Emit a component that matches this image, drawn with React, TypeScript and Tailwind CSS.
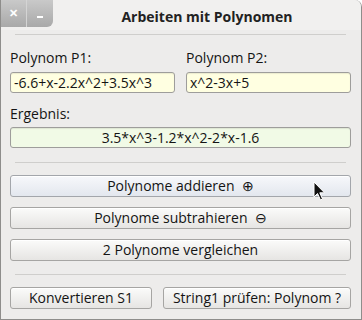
import React from "react";

const font = { fontFamily: '"Open Sans", "Noto Sans", sans-serif' };

function Separator({ className = "" }: { className?: string }) {
  return <div className={`mx-[5px] h-px bg-[#cfcecc] ${className}`} />;
}

function Button({
  children,
  hover = false,
  className = "",
}: {
  children: React.ReactNode;
  hover?: boolean;
  className?: string;
}) {
  return (
    <div
      className={`flex h-[22px] items-center justify-center rounded-[3px] border text-[14px] leading-[16px] text-[#141414] shadow-[inset_0_1px_0_#ffffff] ${
        hover
          ? "border-[#a3a6ab] bg-gradient-to-b from-[#f7f8fb] to-[#e3e7ee]"
          : "border-[#a6a5a3] bg-gradient-to-b from-[#fbfbfa] to-[#e6e5e3]"
      } ${className}`}
    >
      {children}
    </div>
  );
}

function Field({ value, bg, center = false }: { value: string; bg: string; center?: boolean }) {
  return (
    <div
      className={`flex h-[21px] items-center rounded-[3px] border border-[#9e9d9b] px-[3px] text-[14px] leading-[16px] text-[#141414] shadow-[inset_0_1px_1px_rgba(0,0,0,0.08)] ${bg} ${
        center ? "justify-center" : ""
      }`}
    >
      {value}
    </div>
  );
}

export default function App() {
  return (
    <div
      style={font}
      className="relative flex h-[320px] w-[362px] flex-col overflow-hidden rounded-tr-[7px] border-x border-b border-[#8e8d8b] bg-[#edeceb]"
    >
      {/* Title bar */}
      <div className="flex h-[30px] bg-[#f1f0ef]">
        <div className="flex h-[27px]">
          <div className="flex w-[26px] items-center justify-center border-r border-[#d4d4d4] bg-gradient-to-b from-[#c9c9c9] to-[#a9a9a9] text-[11px] font-bold text-white">
            ✕
          </div>
          <div className="flex w-[26px] items-end justify-center rounded-br-[6px] bg-gradient-to-b from-[#c9c9c9] to-[#a9a9a9] pb-[9px]">
            <div className="h-[2px] w-[6px] bg-white" />
          </div>
        </div>
        <div className="flex flex-1 items-center justify-center pt-[2px] text-[14px] font-bold text-[#222]">
          Arbeiten mit Polynomen
        </div>
      </div>

      <div className="flex flex-1 flex-col pl-[9px] pr-[10px]">
        <Separator className="mt-[4px]" />

        <div className="mt-[14px] flex gap-[11px]">
          <div className="flex flex-1 flex-col">
            <div className="h-[17px] text-[14px] leading-[17px] text-[#141414]">Polynom P1:</div>
            <div className="mt-[6px]">
              <Field value="-6.6+x-2.2x^2+3.5x^3" bg="bg-[#ffffe1]" />
            </div>
          </div>
          <div className="flex flex-1 flex-col">
            <div className="h-[17px] text-[14px] leading-[17px] text-[#141414]">Polynom P2:</div>
            <div className="mt-[6px]">
              <Field value="x^2-3x+5" bg="bg-[#ffffe1]" />
            </div>
          </div>
        </div>

        <div className="mt-[12px] h-[17px] text-[14px] leading-[17px] text-[#141414]">Ergebnis:</div>
        <div className="mt-[5px]">
          <Field value="3.5*x^3-1.2*x^2-2*x-1.6" bg="bg-[#f1fae6]" center />
        </div>

        <Separator className="mt-[14px]" />

        <div className="mt-[12px] flex flex-col gap-[10px]">
          <Button hover>Polynome addieren&nbsp;&nbsp;⊕</Button>
          <Button>Polynome subtrahieren&nbsp;&nbsp;⊖</Button>
          <Button>2 Polynome vergleichen</Button>
        </div>

        <Separator className="mt-[13px]" />

        <div className="mt-[12px] flex gap-[11px]">
          <Button className="w-[142px]">Konvertieren S1</Button>
          <Button className="flex-1">String1 prüfen: Polynom ?</Button>
        </div>
      </div>

      {/* mouse cursor */}
      <svg
        className="absolute left-[312px] top-[181px]"
        width="14"
        height="21"
        viewBox="0 0 14 21"
      >
        <path
          d="M1 1 L1 16 L4.5 12.5 L7.5 19 L9.5 18 L6.8 11.8 L11.5 11.8 Z"
          fill="#111"
          stroke="#fff"
          strokeWidth="1"
          strokeLinejoin="round"
        />
      </svg>
    </div>
  );
}
